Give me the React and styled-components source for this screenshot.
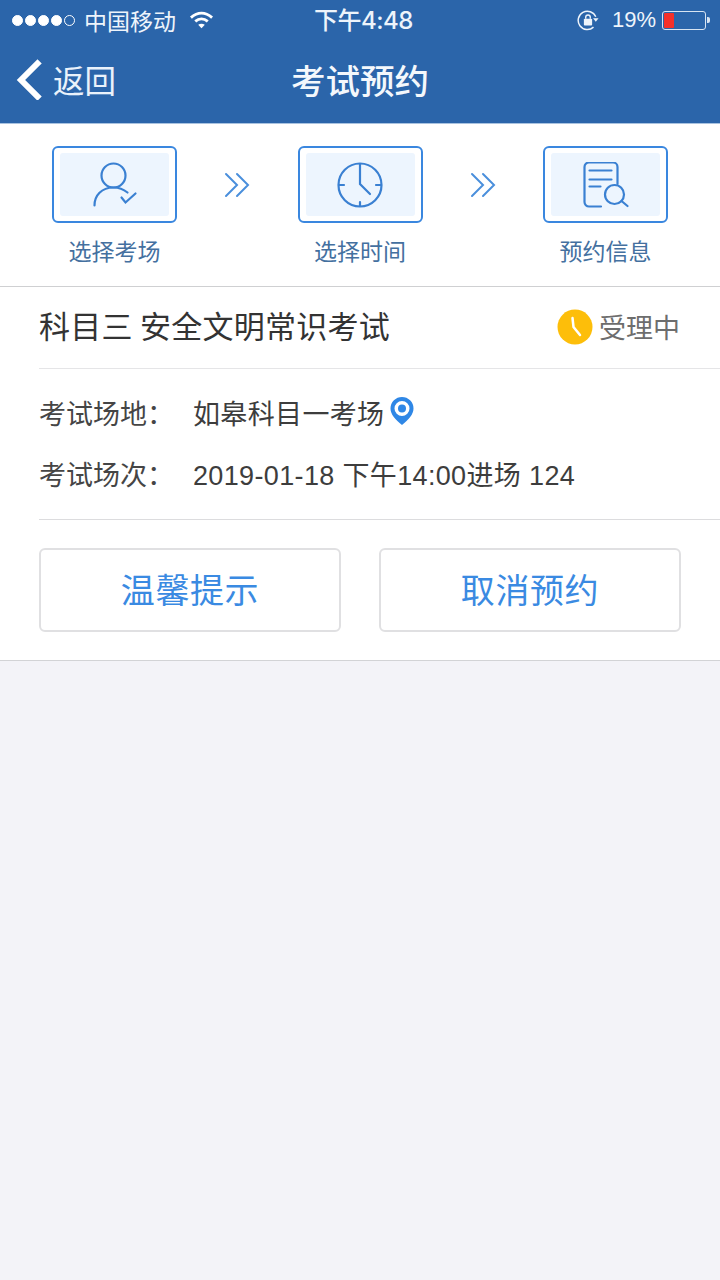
import React from "react";
import styled, { createGlobalStyle } from "styled-components";

const Global = createGlobalStyle`
  html, body { margin: 0; padding: 0; background: #f3f3f8; }
  body { font-family: "Liberation Sans", "Noto Sans CJK SC", Arial, sans-serif; }
  * { box-sizing: border-box; }
`;
const CJK = `"Noto Sans CJK SC", "Liberation Sans", sans-serif`;
const MIXED = `"Liberation Sans", "Noto Sans CJK SC", sans-serif`;

const Page = styled.div`
  width: 720px; height: 1280px; background: #f3f3f8; display: flex; flex-direction: column;
`;
const Header = styled.header`
  height: 124px; background: #2b65aa; border-bottom: 1px solid #a9c3e0; color: #fff; display: flex; flex-direction: column;
`;
const StatusBar = styled.div`
  height: 40px; display: flex; align-items: center; justify-content: space-between; position: relative; padding: 0 14px 0 12px;
  color: #eef4fb;
`;
const StatusGroup = styled.div`
  display: flex; align-items: center;
`;
const Signal = styled.div`
  display: flex; gap: 2px; margin-right: 9px;
`;
const Dot = styled.span`
  width: 11px; height: 11px; border-radius: 50%;
  background: ${p => (p.$off ? "transparent" : "#fff")};
  border: 1px solid #fff;
`;
const Carrier = styled.span`
  font-family: ${CJK}; font-size: 23px; line-height: 28px; margin-right: 13px;
`;
const Clock = styled.div`
  position: absolute; left: 314px; top: 5px; font-family: "Inter", "Noto Sans CJK SC", sans-serif; font-size: 24px; line-height: 32px; font-weight: 500; letter-spacing: -0.5px;
`;
const Percent = styled.span`
  font-family: "Liberation Sans", sans-serif; font-size: 22px; line-height: 28px; margin: 0 6px 0 13px;
`;
const Battery = styled.div`
  width: 44px; height: 19px; border: 1.5px solid #d8e4f2; border-radius: 3px; padding: 1px; position: relative;
  &::after { content: ""; position: absolute; right: -5px; top: 5px; width: 3px; height: 6px; background: #d8e4f2; border-radius: 0 2px 2px 0; }
`;
const BatteryFill = styled.div`
  width: 10px; height: 100%; background: #f5302a; border-radius: 1px;
`;
const NavBar = styled.div`
  flex: 1; position: relative; display: flex; align-items: center; justify-content: center; padding-bottom: 5px;
`;
const Back = styled.div`
  position: absolute; left: 16px; top: 18px; display: flex; align-items: center; gap: 11px;
`;
const BackText = styled.span`
  font-family: ${CJK}; font-size: 31.5px; line-height: 42px; color: #eaf2fb; font-weight: 400;
`;
const Title = styled.h1`
  margin: 0; font-family: ${CJK}; font-size: 34.5px; line-height: 46px; font-weight: 500; color: #f4f8fc;
`;
const Steps = styled.section`
  height: 163px; background: #fff; border-bottom: 1px solid #cfd0d2; display: flex; justify-content: space-between; padding: 22px 52px 0;
`;
const Step = styled.div`
  width: 125px; display: flex; flex-direction: column; align-items: center;
`;
const StepBox = styled.div`
  width: 125px; height: 77px; border: 2px solid #3a87df; border-radius: 6px; padding: 5px 6px 5px; background: #fff;
`;
const StepInner = styled.div`
  width: 100%; height: 100%; background: #edf5fe; border-radius: 3px; display: flex; align-items: center; justify-content: center;
`;
const StepLabel = styled.div`
  margin-top: 11px; font-family: ${CJK}; font-size: 23px; line-height: 32px; color: #44709f;
`;
const Arrow = styled.div`
  height: 77px; display: flex; align-items: center;
`;
const Card = styled.section`
  background: #fff; border-bottom: 1px solid #d2d3d6; padding-left: 39px; height: 374px; display: flex; flex-direction: column;
`;
const TitleRow = styled.div`
  height: 82px; border-bottom: 1px solid #e5e5e7; display: flex; align-items: center; justify-content: space-between; padding: 0 40px 0 0;
`;
const ExamName = styled.div`
  font-family: ${CJK}; font-size: 31px; line-height: 44px; color: #333; margin-top: -5px; letter-spacing: 0.25px;
`;
const Status = styled.div`
  display: flex; align-items: center; gap: 6px; margin-top: -1px;
`;
const StatusText = styled.span`
  font-family: ${CJK}; font-size: 27px; line-height: 40px; color: #6d6d6d;
`;
const Fields = styled.div`
  height: 151px; border-bottom: 1px solid #dcdcde; padding-top: 23px; display: flex; flex-direction: column; gap: 19px;
`;
const Field = styled.div`
  display: flex; align-items: center; height: 42px;
`;
const FieldLabel = styled.span`
  width: 154px; font-family: ${CJK}; font-size: 27px; line-height: 42px; color: #454545;
`;
const FieldValue = styled.span`
  font-family: ${MIXED}; font-size: 27px; line-height: 42px; color: #3d3d3d; letter-spacing: 0.35px; margin-top: 4px;
`;
const Pin = styled.svg`
  margin: -5px 0 0 6px;
`;
const Actions = styled.div`
  display: flex; gap: 38px; padding-top: 28px;
`;
const ActionButton = styled.button`
  width: 302px; height: 84px; background: #fff; border: 2px solid #e0e0e2; border-radius: 6px; color: #3a8ae2;
  font-family: ${CJK}; font-size: 34px; padding: 0 0 4px; letter-spacing: 0.6px;
`;

const Wifi = () => (
  <svg width="25" height="20" viewBox="0 0 26 20" fill="none" stroke="#fff" strokeLinecap="butt">
    <path d="M2 7.5C9 1.5 17 1.5 24 7.5" strokeWidth="3" />
    <path d="M6.5 11.5c4-3.4 9-3.4 13 0" strokeWidth="3" />
    <path d="M13 18.5l-3.4-3.6c2-1.4 4.800-1.400 6.800 0z" fill="#fff" stroke="none" />
  </svg>
);
const RotationLock = () => (
  <svg width="22" height="22" viewBox="0 0 24 24" fill="none">
    <path d="M20.500 8.500A10 10 0 1 0 18 19.800" stroke="#eef4fb" strokeWidth="1.600" />
    <path d="M17.500 10h6l-3 4z" fill="#eef4fb" />
    <rect x="7.500" y="10.500" width="9" height="7.500" rx="1" fill="#eef4fb" />
    <path d="M9.500 10.500V9a2.500 2.500 0 0 1 5 0v1.500" stroke="#eef4fb" strokeWidth="1.500" />
  </svg>
);
const Chevron = () => (
  <svg width="26" height="42" viewBox="0 0 26 42" fill="none" stroke="#fff" strokeWidth="6" strokeLinecap="square">
    <path d="M21.500 5.500L5 22l16.500 16.500" />
  </svg>
);
const PersonIcon = () => (
  <svg width="46" height="46" viewBox="0 0 46 46" fill="none" stroke="#3a80d2" strokeWidth="2.200" strokeLinecap="round">
    <circle cx="21.500" cy="13.500" r="12" />
    <path d="M2.500 43.500c0-10 7-18 19-18 5 0 10 1.800 14 5" />
    <path d="M29.500 35.500l4 5 10-9" />
  </svg>
);
const ClockIcon = () => (
  <svg width="46" height="46" viewBox="0 0 46 46" fill="none" stroke="#3a80d2" strokeWidth="2.200" strokeLinecap="round">
    <circle cx="23" cy="23" r="21.500" />
    <path d="M23 2v20l10 10" />
    <path d="M23 40v4M2 23h5M39 23h5" />
  </svg>
);
const DocIcon = () => (
  <svg width="46" height="46" viewBox="0 0 46 46" fill="none" stroke="#3a80d2" strokeWidth="2.200" strokeLinecap="round">
    <path d="M18 44.500H6a4.500 4.500 0 0 1-4.500-4.500V5A4.500 4.500 0 0 1 6 .5h24A4.500 4.500 0 0 1 34.500 5v17" />
    <path d="M6.500 8.500h22M6.500 17.500h22M6.500 24.500h11" />
    <circle cx="31.500" cy="32.500" r="9.500" />
    <path d="M38.500 39l6 5" />
  </svg>
);
const DoubleArrow = () => (
  <svg width="26" height="26" viewBox="0 0 26 26" fill="none" stroke="#4a8fdc" strokeWidth="2" strokeLinecap="round">
    <path d="M2 2l11 11L2 24M13 2l11 11-11 11" />
  </svg>
);
const StatusClock = () => (
  <svg width="36" height="36" viewBox="0 0 36 36">
    <circle cx="18" cy="18" r="17.500" fill="#fdbe0a" />
    <path d="M15.500 9l1 9 6.500 8" fill="none" stroke="#fff" strokeWidth="2.500" strokeLinecap="round" />
  </svg>
);

const steps = [
  { label: "选择考场", Icon: PersonIcon },
  { label: "选择时间", Icon: ClockIcon },
  { label: "预约信息", Icon: DocIcon },
];

export default function App() {
  return (
    <Page>
      <Global />
      <Header>
        <StatusBar>
          <StatusGroup>
            <Signal>
              <Dot /><Dot /><Dot /><Dot /><Dot $off />
            </Signal>
            <Carrier>中国移动</Carrier>
            <Wifi />
          </StatusGroup>
          <Clock>下午4:48</Clock>
          <StatusGroup>
            <RotationLock />
            <Percent>19%</Percent>
            <Battery><BatteryFill /></Battery>
          </StatusGroup>
        </StatusBar>
        <NavBar>
          <Back>
            <Chevron />
            <BackText>返回</BackText>
          </Back>
          <Title>考试预约</Title>
        </NavBar>
      </Header>
      <Steps>
        {steps.map(({ label, Icon }, i) => (
          <React.Fragment key={label}>
            {i > 0 && <Arrow><DoubleArrow /></Arrow>}
            <Step>
              <StepBox><StepInner><Icon /></StepInner></StepBox>
              <StepLabel>{label}</StepLabel>
            </Step>
          </React.Fragment>
        ))}
      </Steps>
      <Card>
        <TitleRow>
          <ExamName>科目三 安全文明常识考试</ExamName>
          <Status>
            <StatusClock />
            <StatusText>受理中</StatusText>
          </Status>
        </TitleRow>
        <Fields>
          <Field>
            <FieldLabel>考试场地：</FieldLabel>
            <FieldValue>如皋科目一考场</FieldValue>
            <Pin width="24" height="28" viewBox="0 0 24 28">
              <path fillRule="evenodd" d="M12 0a11.500 11.500 0 0 1 11.500 11.500c0 6-5 11-11.500 16.500C5.500 22.500.5 17.500.5 11.500A11.500 11.500 0 0 1 12 0zm0 4a7.500 7.500 0 1 0 0 15 7.500 7.500 0 0 0 0-15z" fill="#2f87e6" />
              <circle cx="12" cy="11.500" r="4" fill="#2f87e6" />
            </Pin>
          </Field>
          <Field>
            <FieldLabel>考试场次：</FieldLabel>
            <FieldValue>2019-01-18 下午14:00进场 124</FieldValue>
          </Field>
        </Fields>
        <Actions>
          <ActionButton>温馨提示</ActionButton>
          <ActionButton>取消预约</ActionButton>
        </Actions>
      </Card>
    </Page>
  );
}
